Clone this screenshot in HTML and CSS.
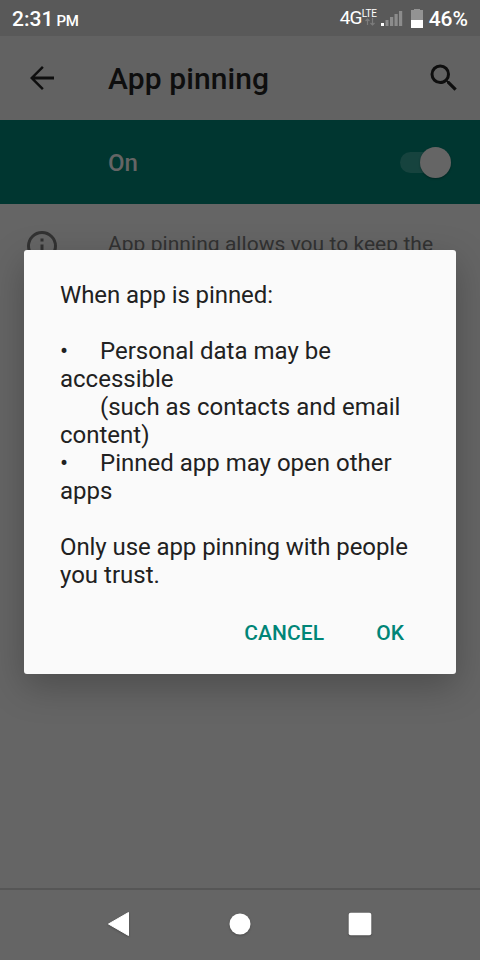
FILE: index.html
```html
<!DOCTYPE html>
<html lang="en">
<head>
<meta charset="utf-8">
<title>App pinning</title>
<link rel="stylesheet" href="styles.css">
</head>
<body>
<div class="screen">
  <header class="status">
    <div class="clock">2:31 <small>PM</small></div>
    <div class="indicators">
      <span class="net">4G</span>
      <div class="data"><span class="lte">LTE</span><svg width="10" height="8" viewBox="0 0 10 8"><path fill="none" stroke="#7c7c7c" stroke-width="1.200" d="M2.500 7V1M.5 3l2-2 2 2M7.500 0v6M5.500 5l2 2 2-2"/></svg></div>
      <svg class="signal" width="22" height="18" viewBox="0 0 22 18"><path fill="#fff" d="M0 14h3v3H0z"/><path fill="#8c8c8c" d="M4.500 11h3v6h-3zM9 8h3.200v9H9zM13.500 5h3.200v12h-3.200zM18 2h3.200v15H18z"/></svg>
      <svg class="battery" width="12" height="20" viewBox="0 0 12 20"><path fill="#939393" d="M3 1h6v1h3v10H0V2h3z"/><path fill="#fff" d="M0 12h12v8H0z"/></svg>
      <span class="percent">46%</span>
    </div>
  </header>
  <div class="toolbar">
    <svg class="back" width="36" height="36" viewBox="0 0 24 24"><path fill="#0e0e0e" d="M20 11H7.330l5.840-5.840L12 4l-8 8 8 8 1.160-1.160L7.330 13H20v-2z"/></svg>
    <h1>App pinning</h1>
    <svg class="search" width="36" height="36" viewBox="0 0 24 24"><path fill="#0e0e0e" d="M15.500 14h-.79l-.28-.27A6.470 6.470 0 0 0 16 9.500 6.500 6.500 0 1 0 9.500 16c1.610 0 3.090-.59 4.230-1.570l.27.28v.79l5 4.990L20.490 19l-4.990-5zm-6 0a4.500 4.500 0 1 1 0-9 4.500 4.500 0 0 1 0 9z"/></svg>
  </div>
  <div class="switchbar"><span>On</span><div class="toggle"><i></i></div></div>
  <main>
    <svg class="info" width="36" height="36" viewBox="0 0 24 24"><path fill="#323232" d="M11 7h2v2h-2zm0 4h2v6h-2zm1-9a10 10 0 1 0 0 20 10 10 0 0 0 0-20zm0 18a8 8 0 1 1 0-16 8 8 0 0 1 0 16z"/></svg>
    <p>App pinning allows you to keep the</p>
  </main>
  <nav>
    <svg width="24" height="28" viewBox="0 0 24 28"><path fill="#fff" d="M20.500 2.500v23L.5 14z" stroke="#fff" stroke-linejoin="round"/></svg>
    <svg width="24" height="28" viewBox="0 0 24 28"><circle cx="12" cy="14" r="10.500" fill="#fff"/></svg>
    <svg width="24" height="28" viewBox="0 0 24 28"><rect x="0.700" y="2.700" width="22.600" height="22.600" rx="2" fill="#fff"/></svg>
  </nav>
  <section class="dialog">
    <div class="message">
      <p class="lead">When app is pinned:</p>
      <p class="section item"><span>•</span><span>Personal data may be</span></p>
      <p>accessible</p>
      <p class="indent">(such as contacts and email</p>
      <p>content)</p>
      <p class="item"><span>•</span><span>Pinned app may open other</span></p>
      <p>apps</p>
      <p class="section closing">Only use app pinning with people</p>
      <p>you trust.</p>
    </div>
    <div class="actions"><button class="cancel">CANCEL</button><button>OK</button></div>
  </section>
</div>
</body>
</html>
```
FILE: styles.css
```css
* { box-sizing: border-box; }
body { margin: 0; font-family: Roboto, sans-serif; }
.screen { position: relative; width: 480px; height: 960px; display: flex; flex-direction: column; background: #656565; overflow: hidden; }
.status { height: 36px; flex: none; display: flex; justify-content: space-between; align-items: center; padding: 2px 12px 0; background: #595959; color: #fff; font-weight: 500; font-size: 21px; }
.clock small { font-size: 15px; margin-left: -2px; letter-spacing: -.3px; }
.indicators { display: flex; align-items: center; }
.net { font-size: 19px; font-weight: 400; letter-spacing: -.8px; margin-top: -3px; }
.data { display: flex; flex-direction: column; width: 16px; margin: -3px 3px 0 0; }
.data svg { margin-left: 3px; }
.lte { font-size: 10px; line-height: 9px; height: 9px; font-weight: 400; letter-spacing: -.2px; }
.battery { margin: -2px 6px 0 8px; }
.signal { margin-top: -3px; }
.toolbar { height: 84px; flex: none; display: flex; align-items: center; padding: 0 18px 0 24px; background: #626262; color: #0e0e0e; }
.toolbar h1 { flex: 1; margin: 0 0 0 48px; font-size: 30px; line-height: 35px; font-weight: 500; letter-spacing: .1px; }
.switchbar { height: 84px; flex: none; display: flex; justify-content: space-between; align-items: center; padding: 1px 29px 0 108px; background: #003630; color: #656565; font-size: 24px; font-weight: 500; }
.toggle { width: 51px; height: 21px; border-radius: 11px; background: #16433e; display: flex; justify-content: flex-end; align-items: center; }
.toggle i { width: 31px; height: 31px; border-radius: 50%; background: #656565; box-shadow: 0 1px 2px rgba(0,0,0,.3); flex: none; }
main { flex: 1; display: flex; padding: 24px 24px 0; }
main p { margin: 2px 0 0 48px; font-size: 21px; line-height: 28px; letter-spacing: .05px; color: #323232; white-space: nowrap; }
nav { height: 72px; flex: none; display: flex; justify-content: center; align-items: center; gap: 96px; padding-bottom: 2px; border-top: 2px solid #565656; }
nav svg { filter: drop-shadow(0 1px 1px rgba(0,0,0,.25)); }
.dialog { position: absolute; left: 24px; top: 250px; width: 432px; height: 424px; padding: 31px 36px 0; border-radius: 3px; background: #fafafa; box-shadow: 0 12px 36px rgba(0,0,0,.25); }
.message { font-size: 24px; line-height: 28px; color: #212121; white-space: nowrap; }
.message p { margin: 0; }
.message .lead { letter-spacing: -.08px; }
.message .section { margin-top: 28px; }
.message .item { display: grid; grid-template-columns: 40px 1fr; }
.message .indent { padding-left: 40px; }
.message .closing { letter-spacing: -.08px; }
.actions { display: flex; justify-content: flex-end; gap: 52px; padding: 32px 16px 0 0; }
.actions button { border: 0; padding: 0; background: none; color: #008577; font: 500 21px/24px Roboto, sans-serif; }
.actions .cancel { letter-spacing: .1px; }
```
